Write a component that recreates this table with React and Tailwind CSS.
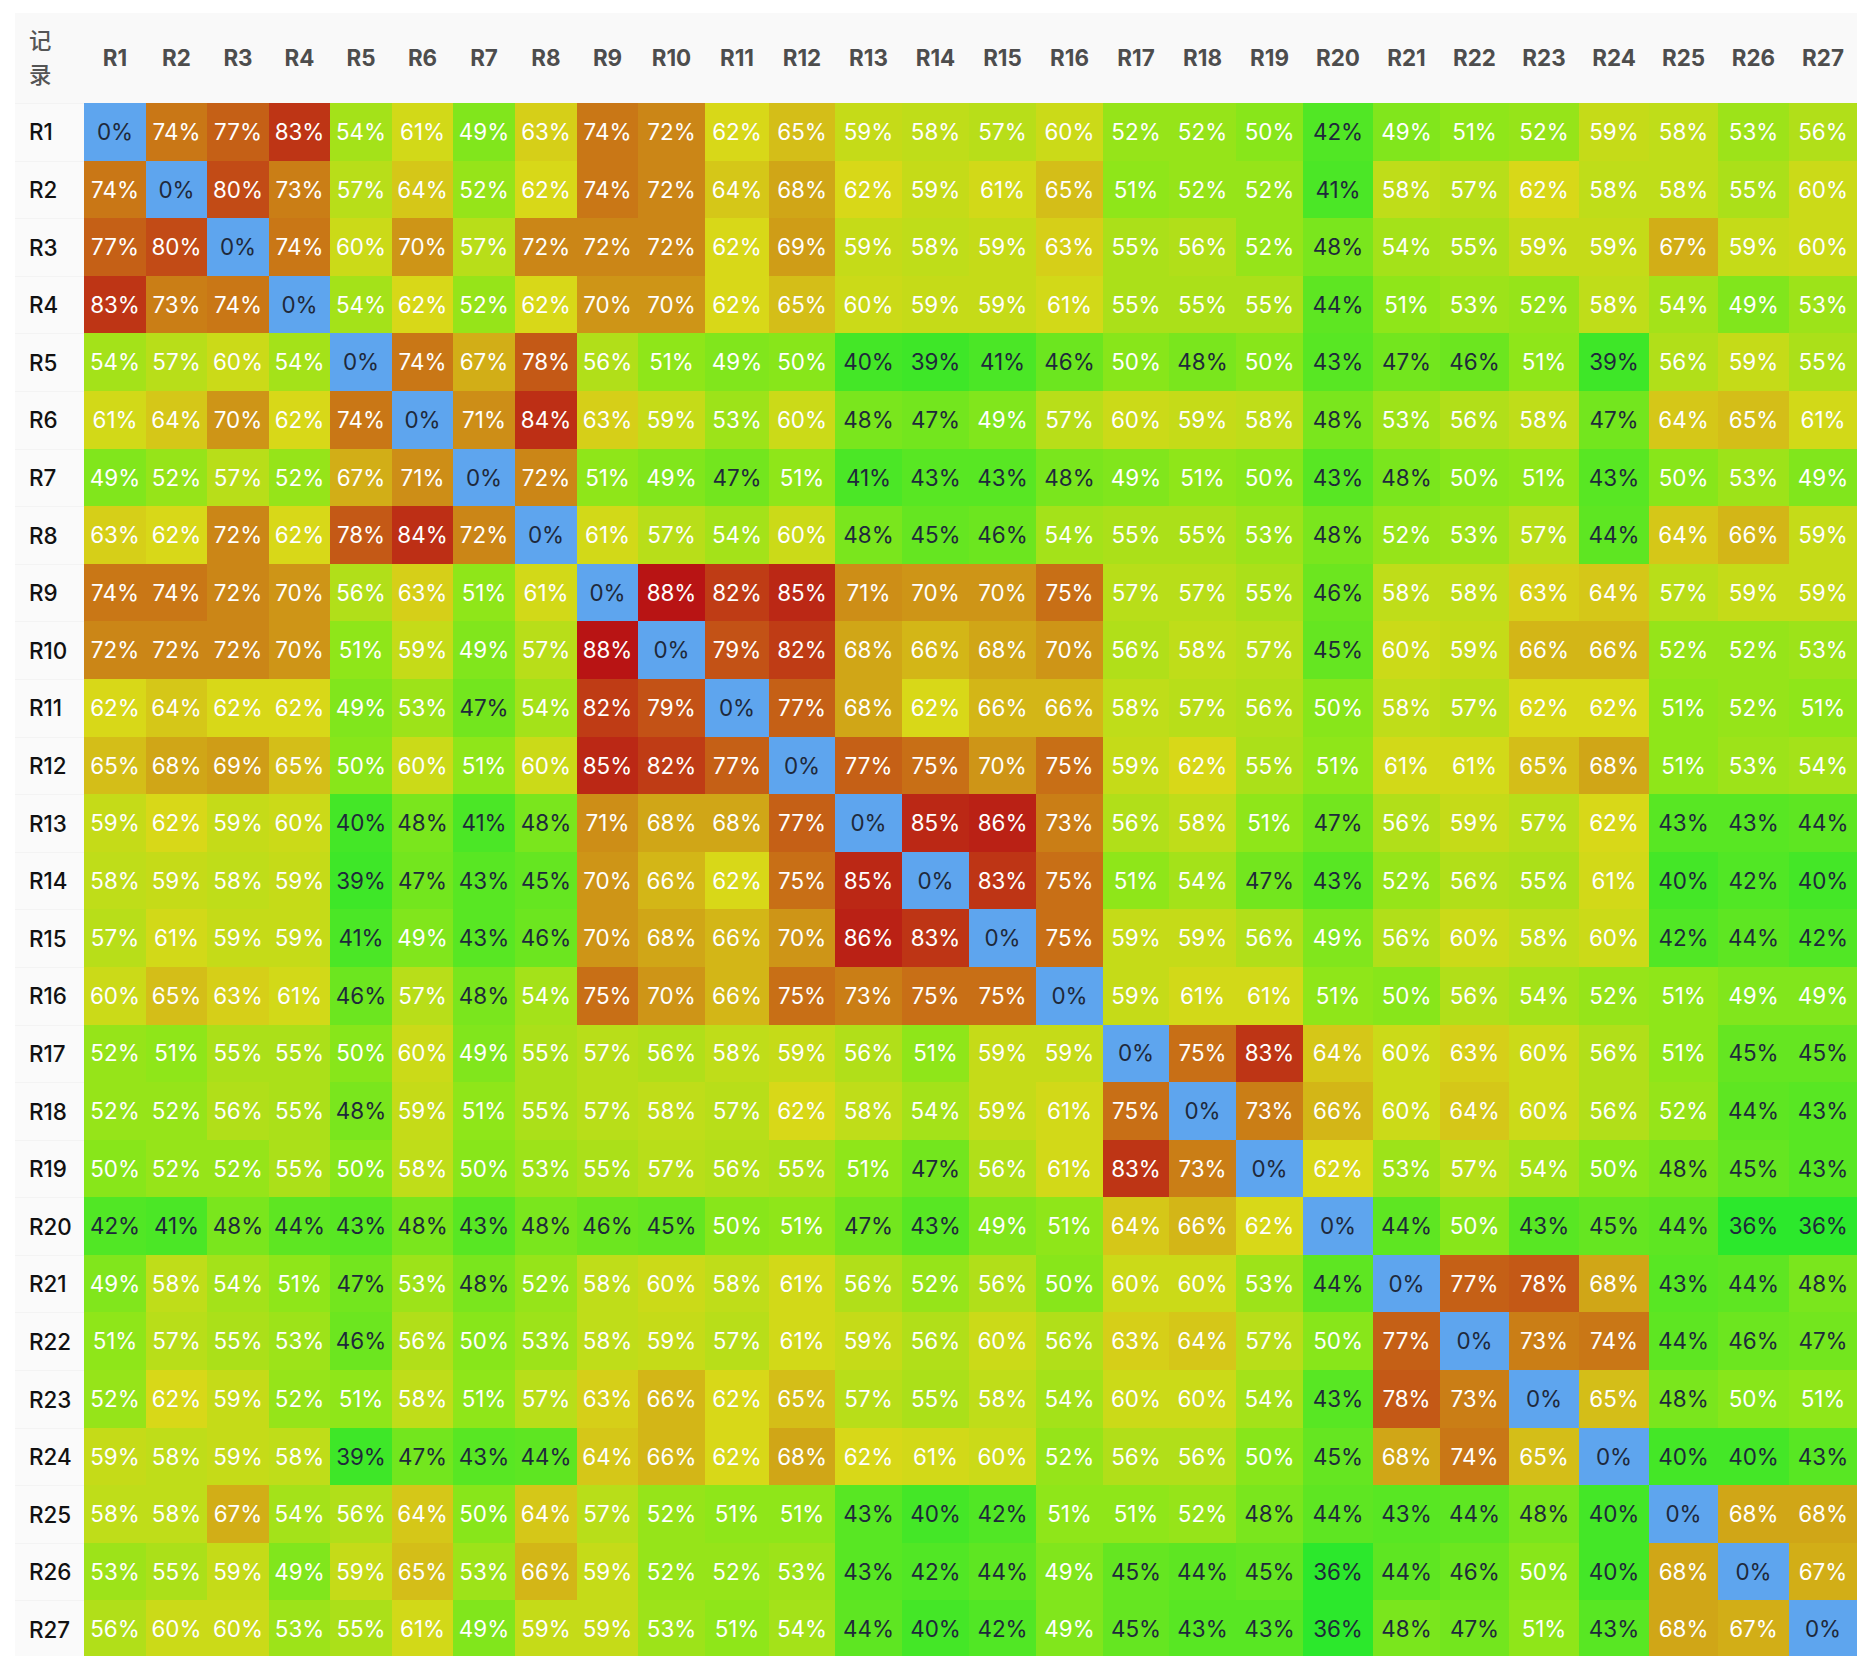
import React from "react";

const LABELS = Array.from({ length: 27 }, (_, i) => `R${i + 1}`);

const DATA = [
  [0, 74, 77, 83, 54, 61, 49, 63, 74, 72, 62, 65, 59, 58, 57, 60, 52, 52, 50, 42, 49, 51, 52, 59, 58, 53, 56],
  [74, 0, 80, 73, 57, 64, 52, 62, 74, 72, 64, 68, 62, 59, 61, 65, 51, 52, 52, 41, 58, 57, 62, 58, 58, 55, 60],
  [77, 80, 0, 74, 60, 70, 57, 72, 72, 72, 62, 69, 59, 58, 59, 63, 55, 56, 52, 48, 54, 55, 59, 59, 67, 59, 60],
  [83, 73, 74, 0, 54, 62, 52, 62, 70, 70, 62, 65, 60, 59, 59, 61, 55, 55, 55, 44, 51, 53, 52, 58, 54, 49, 53],
  [54, 57, 60, 54, 0, 74, 67, 78, 56, 51, 49, 50, 40, 39, 41, 46, 50, 48, 50, 43, 47, 46, 51, 39, 56, 59, 55],
  [61, 64, 70, 62, 74, 0, 71, 84, 63, 59, 53, 60, 48, 47, 49, 57, 60, 59, 58, 48, 53, 56, 58, 47, 64, 65, 61],
  [49, 52, 57, 52, 67, 71, 0, 72, 51, 49, 47, 51, 41, 43, 43, 48, 49, 51, 50, 43, 48, 50, 51, 43, 50, 53, 49],
  [63, 62, 72, 62, 78, 84, 72, 0, 61, 57, 54, 60, 48, 45, 46, 54, 55, 55, 53, 48, 52, 53, 57, 44, 64, 66, 59],
  [74, 74, 72, 70, 56, 63, 51, 61, 0, 88, 82, 85, 71, 70, 70, 75, 57, 57, 55, 46, 58, 58, 63, 64, 57, 59, 59],
  [72, 72, 72, 70, 51, 59, 49, 57, 88, 0, 79, 82, 68, 66, 68, 70, 56, 58, 57, 45, 60, 59, 66, 66, 52, 52, 53],
  [62, 64, 62, 62, 49, 53, 47, 54, 82, 79, 0, 77, 68, 62, 66, 66, 58, 57, 56, 50, 58, 57, 62, 62, 51, 52, 51],
  [65, 68, 69, 65, 50, 60, 51, 60, 85, 82, 77, 0, 77, 75, 70, 75, 59, 62, 55, 51, 61, 61, 65, 68, 51, 53, 54],
  [59, 62, 59, 60, 40, 48, 41, 48, 71, 68, 68, 77, 0, 85, 86, 73, 56, 58, 51, 47, 56, 59, 57, 62, 43, 43, 44],
  [58, 59, 58, 59, 39, 47, 43, 45, 70, 66, 62, 75, 85, 0, 83, 75, 51, 54, 47, 43, 52, 56, 55, 61, 40, 42, 40],
  [57, 61, 59, 59, 41, 49, 43, 46, 70, 68, 66, 70, 86, 83, 0, 75, 59, 59, 56, 49, 56, 60, 58, 60, 42, 44, 42],
  [60, 65, 63, 61, 46, 57, 48, 54, 75, 70, 66, 75, 73, 75, 75, 0, 59, 61, 61, 51, 50, 56, 54, 52, 51, 49, 49],
  [52, 51, 55, 55, 50, 60, 49, 55, 57, 56, 58, 59, 56, 51, 59, 59, 0, 75, 83, 64, 60, 63, 60, 56, 51, 45, 45],
  [52, 52, 56, 55, 48, 59, 51, 55, 57, 58, 57, 62, 58, 54, 59, 61, 75, 0, 73, 66, 60, 64, 60, 56, 52, 44, 43],
  [50, 52, 52, 55, 50, 58, 50, 53, 55, 57, 56, 55, 51, 47, 56, 61, 83, 73, 0, 62, 53, 57, 54, 50, 48, 45, 43],
  [42, 41, 48, 44, 43, 48, 43, 48, 46, 45, 50, 51, 47, 43, 49, 51, 64, 66, 62, 0, 44, 50, 43, 45, 44, 36, 36],
  [49, 58, 54, 51, 47, 53, 48, 52, 58, 60, 58, 61, 56, 52, 56, 50, 60, 60, 53, 44, 0, 77, 78, 68, 43, 44, 48],
  [51, 57, 55, 53, 46, 56, 50, 53, 58, 59, 57, 61, 59, 56, 60, 56, 63, 64, 57, 50, 77, 0, 73, 74, 44, 46, 47],
  [52, 62, 59, 52, 51, 58, 51, 57, 63, 66, 62, 65, 57, 55, 58, 54, 60, 60, 54, 43, 78, 73, 0, 65, 48, 50, 51],
  [59, 58, 59, 58, 39, 47, 43, 44, 64, 66, 62, 68, 62, 61, 60, 52, 56, 56, 50, 45, 68, 74, 65, 0, 40, 40, 43],
  [58, 58, 67, 54, 56, 64, 50, 64, 57, 52, 51, 51, 43, 40, 42, 51, 51, 52, 48, 44, 43, 44, 48, 40, 0, 68, 68],
  [53, 55, 59, 49, 59, 65, 53, 66, 59, 52, 52, 53, 43, 42, 44, 49, 45, 44, 45, 36, 44, 46, 50, 40, 68, 0, 67],
  [56, 60, 60, 53, 55, 61, 49, 59, 59, 53, 51, 54, 44, 40, 42, 49, 45, 43, 43, 36, 48, 47, 51, 43, 68, 67, 0],
];

const MIN = 36;
const MAX = 88;

// green (low) -> yellow -> red (high)
function heat(v) {
  const t = Math.min(1, Math.max(0, (v - MIN) / (MAX - MIN)));
  const hue = (1 - t) * 120;
  const light = 40 + (hue / 120) * 14;
  return `hsl(${hue.toFixed(1)}, 80%, ${light.toFixed(1)}%)`;
}

function Cell({ value }) {
  if (value === 0) {
    return (
      <div className="flex items-center justify-center bg-[#5ea5ee] text-[#1e293b]">
        0%
      </div>
    );
  }
  const dark = value < 49;
  return (
    <div
      className={
        dark
          ? "flex items-center justify-center text-[#1e293b]"
          : "flex items-center justify-center text-white"
      }
      style={{ backgroundColor: heat(value) }}
    >
      {value}%
    </div>
  );
}

export default function App() {
  return (
    <div className="min-h-screen bg-white pt-[13px] pl-[15px] font-[Inter,'Noto_Sans_CJK_SC',sans-serif] text-[22.4px] leading-[1.5]">
      <div className="grid w-[1842px] grid-cols-[69px_62px_61px_62px_61px_62px_61px_62px_62px_61px_67px_64px_66px_67px_67px_67px_67px_66px_67px_67px_70px_67px_69px_70px_70px_69px_71px_68px] grid-rows-[90px] auto-rows-[57.6px]">
        <div className="flex items-center bg-[#f9f9f9] pl-[14px] font-medium text-[#555]">
          <span className="w-[1em] break-all">记录</span>
        </div>
        {LABELS.map((l) => (
          <div
            key={l}
            className="flex items-center justify-center bg-[#f9f9f9] font-bold text-[#4d4d4d]"
          >
            {l}
          </div>
        ))}
        {DATA.map((row, i) => (
          <React.Fragment key={i}>
            <div className="flex items-center border-t border-[#f3f3f3] bg-[#fafafa] pl-[14px] font-medium text-[#111]">
              {LABELS[i]}
            </div>
            {row.map((v, j) => (
              <Cell key={j} value={v} />
            ))}
          </React.Fragment>
        ))}
      </div>
    </div>
  );
}
